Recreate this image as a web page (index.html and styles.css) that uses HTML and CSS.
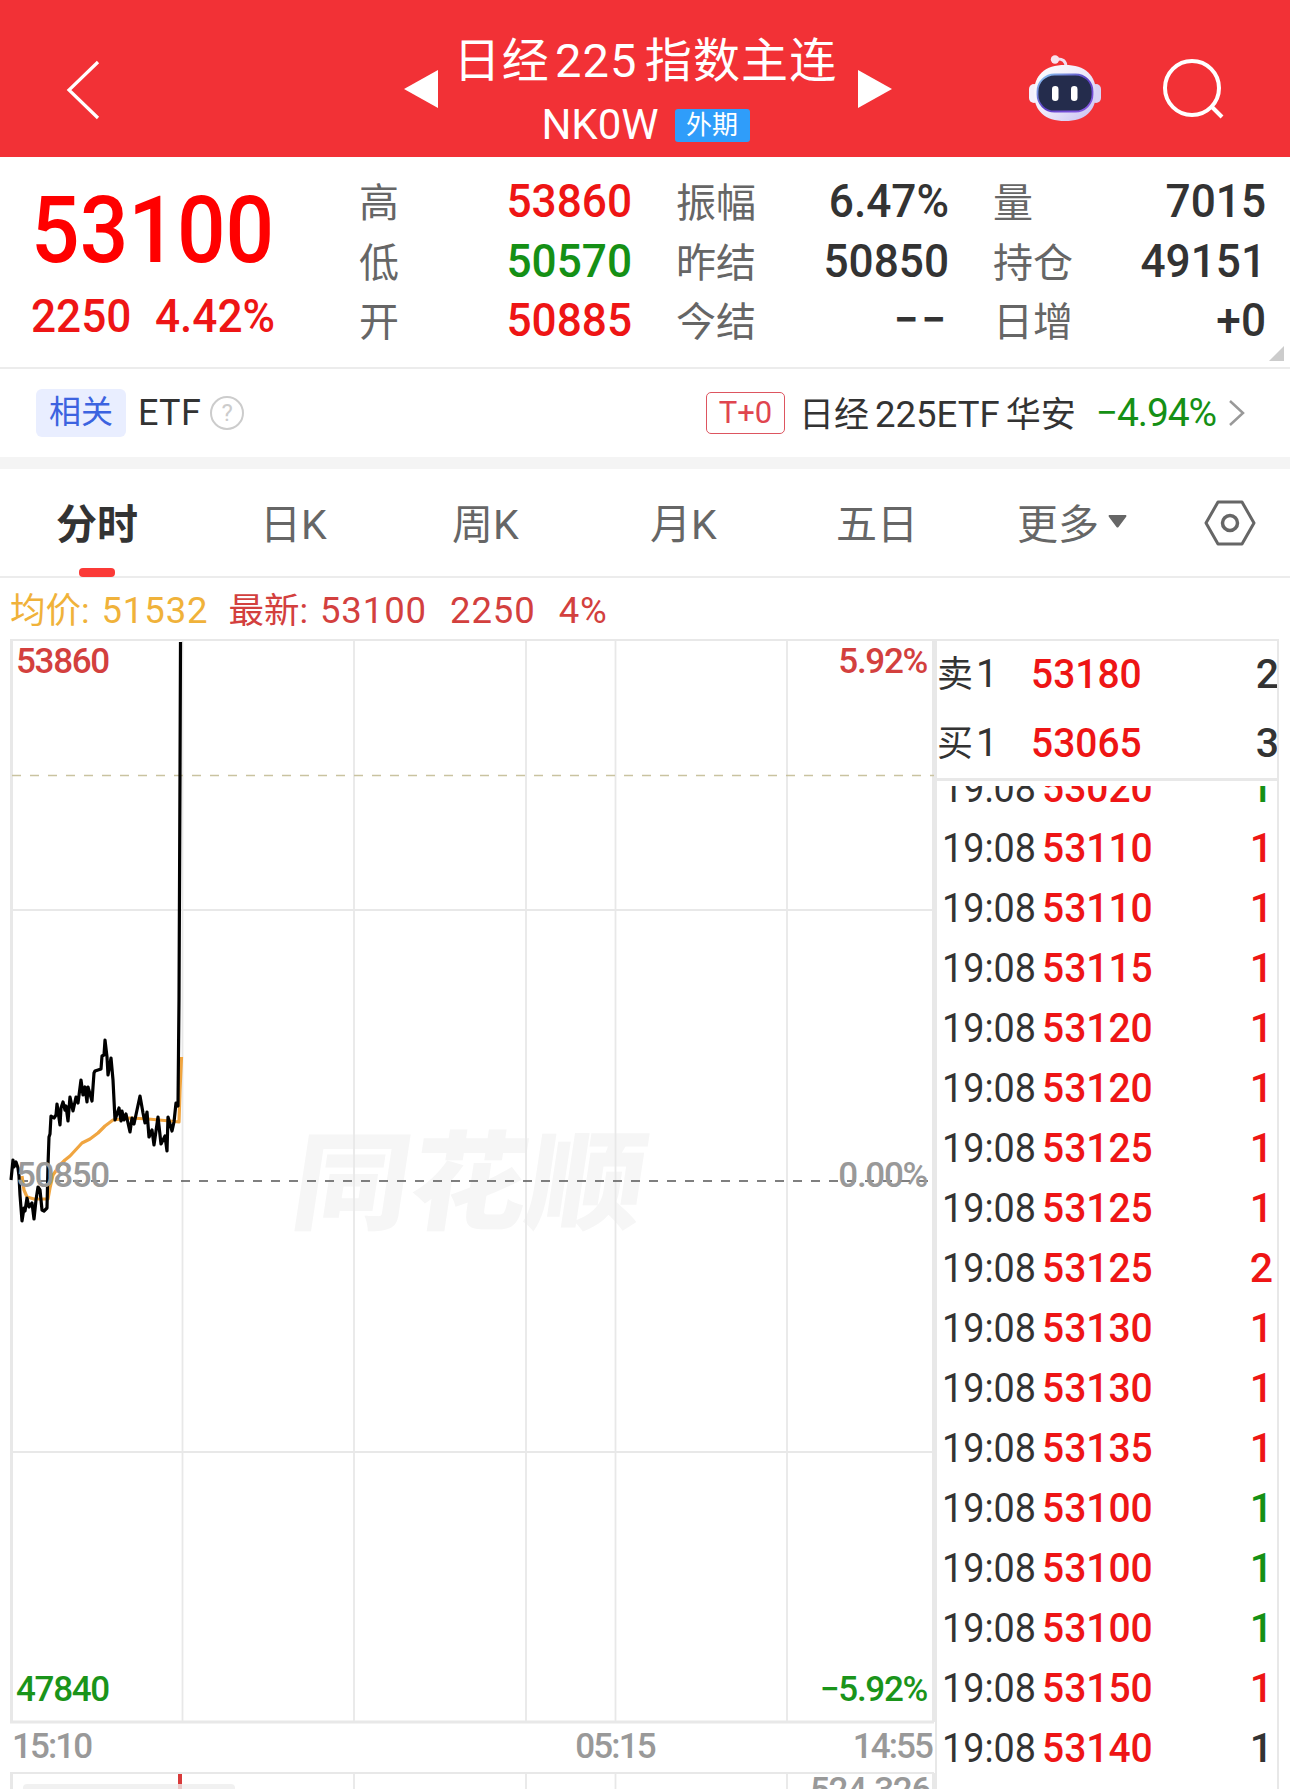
FILE: index.html
```html
<!DOCTYPE html>
<html lang="zh-CN">
<head>
  <meta charset="UTF-8" />
  <meta name="viewport" content="width=device-width, initial-scale=1.0"/>
  <title>日经225指数主连</title>
  <link rel="stylesheet" href="styles.css">
</head>
<body>

<header>
  <svg class="back" width="36" height="60" viewBox="0 0 36 60"><path d="M33 2 L4 30 L33 58" fill="none" stroke="#fff" stroke-width="3.2"/></svg>
  <svg class="prev" width="34" height="38" viewBox="0 0 34 38"><path d="M34 0 V38 L0 19Z" fill="#fff"/></svg>
  <div class="title">
    <h1>日经<span>225</span>指数主连</h1>
    <p>NK0W <span class="tag">外期</span></p>
  </div>
  <svg class="next" width="34" height="38" viewBox="0 0 34 38"><path d="M0 0 V38 L34 19Z" fill="#fff"/></svg>
  <svg class="robot" width="74" height="68" viewBox="0 0 74 68">
    <defs>
      <linearGradient id="shell" x1="0" y1="0" x2="1" y2="1"><stop offset="0" stop-color="#fff"/><stop offset=".5" stop-color="#eeeafa"/><stop offset="1" stop-color="#c5bdf2"/></linearGradient>
      <linearGradient id="rim" x1="0" y1="0" x2="1" y2="1"><stop offset="0" stop-color="#8fd2f5"/><stop offset=".5" stop-color="#5b3fc4"/><stop offset="1" stop-color="#8b5be8"/></linearGradient>
    </defs>
    <path d="M28 5 Q38 4 38 13" fill="none" stroke="#f3dff0" stroke-width="3"/>
    <circle cx="27" cy="5.500" r="4.200" fill="#f9e3ee"/>
    <rect x="1" y="30" width="10" height="19" rx="5" fill="#f3effb"/>
    <rect x="63" y="30" width="10" height="19" rx="5" fill="#d9d2f5"/>
    <path d="M37 11 C57 11 68 21 68 39 C68 57 57 67 37 67 C17 67 6 57 6 39 C6 21 17 11 37 11Z" fill="url(#shell)"/>
    <rect x="9.500" y="20.500" width="55" height="37" rx="17" fill="#242c4c" stroke="url(#rim)" stroke-width="1.800"/>
    <rect x="24" y="32" width="6.500" height="15" rx="3.200" fill="#fff"/>
    <rect x="43" y="32" width="6.500" height="15" rx="3.200" fill="#fff"/>
  </svg>
  <svg class="search" width="64" height="62" viewBox="0 0 64 62"><circle cx="30" cy="30" r="27" fill="none" stroke="#fff" stroke-width="4"/><path d="M49 48 L60 59" stroke="#fff" stroke-width="4"/></svg>
</header>

<section class="quote">
  <div class="last">
    <div class="price">53100</div>
    <div class="change"><span>2250</span><span>4.42%</span></div>
  </div>
  <dl>
    <dt>高</dt><dd class="up">53860</dd>
    <dt>低</dt><dd class="down">50570</dd>
    <dt>开</dt><dd class="up">50885</dd>
  </dl>
  <dl>
    <dt>振幅</dt><dd>6.47%</dd>
    <dt>昨结</dt><dd>50850</dd>
    <dt>今结</dt><dd class="none">−−</dd>
  </dl>
  <dl>
    <dt>量</dt><dd>7015</dd>
    <dt>持仓</dt><dd>49151</dd>
    <dt>日增</dt><dd>+0</dd>
  </dl>
  <i class="fold"></i>
</section>

<section class="related">
  <span class="label">相关</span>
  <span class="etf">ETF</span>
  <span class="help">?</span>
  <span class="t0">T+0</span>
  <span class="name">日经<b>225ETF</b>华安</span>
  <span class="rate">−4.94%</span>
  <svg width="18" height="28" viewBox="0 0 18 28"><path d="M2 2 L15 14 L2 26" fill="none" stroke="#999" stroke-width="2.500"/></svg>
</section>

<nav>
  <a class="active">分时</a>
  <a>日K</a>
  <a>周K</a>
  <a>月K</a>
  <a>五日</a>
  <a class="more">更多<svg width="19" height="13" viewBox="0 0 19 13"><path d="M1 0 H18 Q19 1 18 2 L10.500 12 Q9.500 13 8.500 12 L1 2 Q0 1 1 0Z" fill="#666"/></svg></a>
  <svg class="setting" width="52" height="46" viewBox="0 0 52 46"><path d="M14 2 H38 L50 23 L38 44 H14 L2 23Z" fill="none" stroke="#666" stroke-width="3" stroke-linejoin="round"/><circle cx="26" cy="23" r="7.500" fill="none" stroke="#666" stroke-width="3.500"/></svg>
</nav>

<div class="info">
  <span class="avg">均价: <b>51532</b></span>
  <span>最新: <b>53100</b></span>
  <span><b>2250</b></span>
  <span><b>4%</b></span>
</div>

<main>
  <svg class="chart" width="936" height="1150" viewBox="0 639 936 1150">
    <text class="watermark" transform="translate(288 1221) scale(1 .93) skewX(-8)" textLength="352" lengthAdjust="spacingAndGlyphs">同花顺</text>
    <g class="grid">
      <path d="M10 910H934M10 1452H934"/>
      <path d="M182.500 640V1722M354 640V1722M526 640V1722M615.500 640V1722M787 640V1722"/>
      <path d="M354 1773V1789M526 1773V1789M615.500 1773V1789M787 1773V1789"/>
      <path d="M10 640H934M10 1773H934"/>
      <path class="frame" d="M11.500 639V1722H934M933.500 639V1722M11.500 1773V1789M933.500 1773V1789"/>
    </g>
    <path d="M12 1181H934" stroke="#555" stroke-width="1.300" stroke-dasharray="9 9" stroke-dashoffset="-7"/>
    <path d="M12 775.500H934" stroke="#c9c3a0" stroke-width="1.500" stroke-dasharray="9 9"/>
    <path class="avg-line" d="M22 1176L24 1190L27 1197L34 1199L48 1199L50 1188L53 1175L60 1165L65 1160L70 1156L82 1143L90 1139L98 1133L105 1126L113 1120L130 1118L148 1119L170 1121L179 1122L180 1090L181.500 1057"/>
    <path class="price-line" d="M11 1180L13 1160L14 1167L16 1162L18 1168L19 1176L20 1195L22 1221L24 1208L25 1211L27 1198L29 1207L32 1203L34 1219L36 1200L38 1187L40 1190L42 1210L44 1211L47 1208L48 1165L49 1137L50 1134L51 1116L54 1118L56 1115L57 1104L60 1125L61 1108L63 1102L65 1110L66 1106L68 1121L70 1097L73 1111L76 1097L78 1103L81 1080L83 1095L85 1087L87 1102L88 1087L92 1101L94 1073L95 1071L98 1070L101 1069L102 1056L104 1055L105 1040L107 1057L108 1075L111 1058L113 1080L115 1120L119 1108L121 1121L122 1111L124 1120L126 1114L130 1132L132 1118L134 1124L137 1110L140 1096L143 1113L145 1123L147 1112L149 1137L152 1130L154 1145L158 1117L161 1144L165 1136L167 1151L168 1117L172 1131L174 1122L176 1103L178 1106L179 1000L180 775L180.500 642"/>
    <g class="scale">
      <text x="16" y="673" fill="#d3403e">53860</text>
      <text x="927" y="673" fill="#d3403e" text-anchor="end">5.92%</text>
      <text x="16" y="1187" fill="#999">50850</text>
      <text x="927" y="1187" fill="#999" text-anchor="end">0.00%</text>
      <text x="16" y="1701" fill="#1a941a">47840</text>
      <text x="927" y="1701" fill="#1a941a" text-anchor="end">−5.92%</text>
      <g class="time">
        <text x="12" y="1758">15:10</text>
        <text x="615" y="1758" text-anchor="middle">05:15</text>
        <text x="932" y="1758" text-anchor="end">14:55</text>
      </g>
      <text x="930" y="1802" fill="#999" text-anchor="end">524.326</text>
    </g>
    <path d="M180 1774V1789" stroke="#d93a3a" stroke-width="4"/>
    <rect x="23" y="1784" width="212" height="30" rx="4" fill="#eee" fill-opacity=".8"/>
  </svg>

  <aside>
    <div class="book">
      <div><span>卖<b>1</b></span><em>53180</em><strong>2</strong></div>
      <div><span>买<b>1</b></span><em>53065</em><strong>3</strong></div>
    </div>
    <div class="ticks" id="ticks"></div>
  </aside>
</main>

<script>
const trades = [
  ["53020", 1, "down"], ["53110", 1, "up"], ["53110", 1, "up"], ["53115", 1, "up"],
  ["53120", 1, "up"], ["53120", 1, "up"], ["53125", 1, "up"], ["53125", 1, "up"],
  ["53125", 2, "up"], ["53130", 1, "up"], ["53130", 1, "up"], ["53135", 1, "up"],
  ["53100", 1, "down"], ["53100", 1, "down"], ["53100", 1, "down"], ["53150", 1, "up"],
  ["53140", 1, ""]
];
document.getElementById("ticks").innerHTML = trades.map(t =>
  `<div><span>19:08</span><em>${t[0]}</em><strong class="${t[2]}">${t[1]}</strong></div>`
).join("");
</script>

</body>
</html>
```
FILE: styles.css
```css
* {
  box-sizing: border-box;
}
body {
  font-family: Roboto, 'Noto Sans CJK SC', sans-serif;
  background: #fff;
  color: #333;
  margin: 0;
  height: 1789px;
  overflow: hidden;
}
h1, p, dl, dd {
  margin: 0;
}
b, em, strong {
  font-weight: inherit;
  font-style: normal;
}
svg {
  display: block;
  flex: none;
}
.up {
  color: #ee1515;
}
.down {
  color: #159015;
}

/* header */
header {
  display: flex;
  align-items: flex-start;
  height: 157px;
  background: #f23136;
  color: #fff;
}
.back {
  margin: 60px 0 0 65px;
}
.prev {
  margin: 70px 0 0 303px;
}
.title {
  width: 420px;
  padding: 27px 5px 0 0;
  text-align: center;
  white-space: nowrap;
}
.title h1 {
  font-size: 47px;
  font-weight: 400;
  line-height: 68px;
  letter-spacing: 1.2px;
}
.title h1 span {
  margin: 0 7px 0 5px;
}
.title p {
  display: flex;
  justify-content: center;
  align-items: center;
  gap: 16px;
  font-size: 42px;
  line-height: 60px;
}
.title .tag {
  width: 75px;
  height: 33px;
  border-radius: 3px;
  background: #2f9dfa;
  font-size: 26px;
  line-height: 32px;
}
.next {
  margin-top: 70px;
}
.robot {
  margin: 54px 0 0 136px;
}
.search {
  margin: 58px 0 0 60px;
}

/* quote */
.quote {
  position: relative;
  display: flex;
  height: 212px;
  border-bottom: 2px solid #ececec;
  padding-top: 16px;
  font-weight: 500;
}
.last {
  flex: none;
  width: 359px;
  padding-left: 31px;
  color: #f00;
}
.price {
  font-size: 93px;
  line-height: 116px;
  transform: scaleX(.92);
  transform-origin: left;
}
.change {
  display: flex;
  gap: 25px;
  font-size: 47px;
  line-height: 54px;
  color: #ee1515;
  transform: scaleX(.94);
  transform-origin: left;
}
dl {
  flex: none;
  display: grid;
  grid-template-columns: auto 1fr;
  grid-auto-rows: 59.5px;
  width: 273px;
  margin-right: 44px;
}
dl:last-of-type {
  margin-right: 0;
}
dt {
  font-size: 40px;
  font-weight: 400;
  line-height: 61px;
  color: #666;
}
dd {
  font-size: 47px;
  line-height: 55px;
  text-align: right;
  transform: scaleX(.94);
  transform-origin: right;
}
.none {
  letter-spacing: 3px;
}
.fold {
  position: absolute;
  right: 6px;
  bottom: 6px;
  border-left: 15px solid transparent;
  border-bottom: 15px solid #ccc;
}

/* related etf */
.related {
  display: flex;
  align-items: center;
  height: 100px;
  border-bottom: 12px solid #f4f4f4;
  padding: 0 44px 0 36px;
  font-size: 36px;
}
.label {
  width: 90px;
  height: 48px;
  border-radius: 6px;
  background: #e9eeff;
  color: #3c63e0;
  font-size: 32px;
  line-height: 47px;
  text-align: center;
}
.etf {
  margin-left: 12px;
  letter-spacing: .3px;
}
.help {
  width: 34px;
  height: 34px;
  margin-left: 9px;
  border: 2.5px solid #ccc;
  border-radius: 50%;
  color: #ccc;
  font-size: 24px;
  line-height: 30px;
  text-align: center;
}
.t0 {
  width: 79px;
  height: 42px;
  margin-left: auto;
  border: 1.5px solid #dd5560;
  border-radius: 5px;
  color: #e0454f;
  font-size: 31px;
  line-height: 40px;
  text-align: center;
}
.name {
  margin: -4px 0 0 14px;
  font-size: 35px;
}
.name b {
  margin: 0 6px;
  font-size: 36.5px;
}
.rate {
  margin: 0 12px 0 20px;
  font-size: 39px;
  letter-spacing: -1.1px;
  color: #159015;
}

/* tabs */
nav {
  display: flex;
  align-items: center;
  height: 109px;
  border-bottom: 2px solid #ececec;
  padding: 0 34px 0 56px;
}
nav a {
  position: relative;
  width: 196px;
  margin-top: -3px;
  font-size: 41px;
  color: #666;
}
nav a:nth-child(1) { width: 204px; }
nav a:nth-child(2) { width: 192px; }
nav a:nth-child(3) { width: 198px; }
nav a:nth-child(4) { width: 186px; }
nav a:nth-child(5) { width: 181px; }
nav .active {
  font-weight: 700;
  color: #333;
}
nav .active::after {
  content: "";
  position: absolute;
  left: 23px;
  bottom: -26px;
  width: 36px;
  height: 9px;
  border-radius: 4px;
  background: #fb3a37;
}
nav .more {
  display: flex;
  align-items: center;
  gap: 9px;
  width: auto;
}
.setting {
  margin-left: auto;
}

/* average and latest price */
.info {
  display: flex;
  align-items: baseline;
  gap: 20px;
  height: 61px;
  padding: 4px 0 0 10px;
  font-size: 35.5px;
  color: #d3403e;
  white-space: nowrap;
}
.info b {
  font-size: 36.5px;
  letter-spacing: .9px;
  margin-left: 3px;
}
.info .avg {
  color: #f0b23a;
}

/* chart */
main {
  display: flex;
  height: 1150px;
}
.grid path {
  fill: none;
  stroke: #e8e8e8;
  stroke-width: 1.8;
}
.grid .frame {
  stroke-width: 3;
}
.watermark {
  font-family: 'Noto Sans CJK SC', sans-serif;
  font-size: 115px;
  font-weight: 900;
  fill: #f6f6f6;
}
.price-line, .avg-line {
  fill: none;
  stroke: #000;
  stroke-width: 3.2;
  stroke-linejoin: round;
}
.avg-line {
  stroke: #f0a540;
}
.scale text {
  font-size: 35px;
  font-weight: 500;
  letter-spacing: -1.3px;
}
.scale .time text {
  fill: #999;
  letter-spacing: -1.9px;
}

/* order book and trades */
aside {
  width: 344px;
  margin-left: -1px;
  border: 2px solid #e8e8e8;
  border-bottom: 0;
  font-weight: 500;
  overflow: hidden;
}
.book {
  height: 140px;
  border-bottom: 3px solid #e8e8e8;
}
.book div {
  display: flex;
  height: 69px;
  font-size: 41px;
  line-height: 67px;
}
.book span {
  width: 94px;
  font-size: 36px;
  font-weight: 400;
}
.book b {
  font-size: 39px;
  margin-left: 3px;
}
.book em, .ticks em {
  color: #ee1515;
  transform: scaleX(.95);
  transform-origin: left;
}
.book strong, .ticks strong {
  margin-left: auto;
}
.book strong {
  margin-right: -2px;
}
.ticks {
  height: 1003px;
  margin-top: 5px;
  overflow: hidden;
}
.ticks div {
  display: flex;
  height: 60px;
  padding: 0 4px 0 5px;
  font-size: 41px;
  line-height: 61px;
}
.ticks div:first-child {
  margin-top: -28px;
}
.ticks span {
  width: 100px;
  font-weight: 400;
  transform: scaleX(.92);
  transform-origin: left;
}
```
